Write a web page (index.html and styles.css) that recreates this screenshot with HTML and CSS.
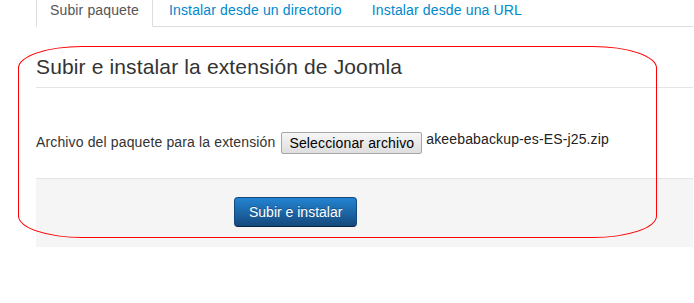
FILE: index.html
```html
<!DOCTYPE html>
<html lang="es">
<head>
  <meta charset="UTF-8" />
  <title>Gestor de extensiones: Instalar</title>
  <link rel="stylesheet" href="styles.css">
</head>
<body>
  <div class="page">
    <ul class="tabs">
      <li><a class="tab active" href="#">Subir paquete</a></li>
      <li><a class="tab" href="#">Instalar desde un directorio</a></li>
      <li><a class="tab" href="#">Instalar desde una URL</a></li>
    </ul>

    <form class="upload">
      <div class="legend">Subir e instalar la extensión de Joomla</div>
      <div class="row">
        <label class="label">Archivo del paquete para la extensión</label>
        <span class="file-btn">Seleccionar archivo</span>
        <span class="file-name">akeebabackup-es-ES-j25.zip</span>
      </div>
      <div class="actions">
        <button type="button" class="btn-primary">Subir e instalar</button>
      </div>
    </form>

    <div class="mark"></div>
  </div>
</body>
</html>
```

FILE: styles.css
```css
body {
  margin: 0;
  background: #fff;
  font-family: 'Liberation Sans', Arial, sans-serif;
  font-size: 14px;
  letter-spacing: 0.14px;
  color: #333;
}

.page {
  position: relative;
  padding-left: 36px;
  padding-right: 1px;
}

.tabs {
  display: flex;
  margin: 0;
  padding: 0;
  list-style: none;
  border-bottom: 1px solid #ddd;
}

.tab {
  display: block;
  margin-right: 2px;
  margin-bottom: -1px;
  padding: 0 13px 6px;
  line-height: 20px;
  border: 1px solid transparent;
  border-top: none;
  color: #08c;
  text-decoration: none;
}

.tab.active {
  color: #555;
  background: #fff;
  border-color: #ddd;
  border-bottom-color: #fff;
}

.upload {
  margin-top: 20px;
}

.legend {
  font-size: 21px;
  line-height: 40px;
  color: #333;
  border-bottom: 1px solid #e5e5e5;
}

.row {
  display: flex;
  align-items: flex-start;
  margin-top: 44px;
  height: 22px;
}

.label {
  line-height: 20px;
  margin-right: 6px;
}

.file-btn {
  padding: 2px 7px;
  line-height: 16px;
  color: #000;
  border: 1px solid #a6a6a6;
  border-radius: 2px;
  background: linear-gradient(#f6f6f6, #dedede);
}

.file-name {
  margin-left: 4px;
  margin-top: -3px;
  line-height: 20px;
  color: #222;
}

.actions {
  margin-top: 24px;
  padding: 18px 0 20px 198px;
  background: #f5f5f5;
  border-top: 1px solid #e5e5e5;
}

.btn-primary {
  padding: 4px 14px;
  font-family: inherit;
  font-size: 14px;
  line-height: 20px;
  color: #fff;
  text-shadow: 0 -1px 0 rgba(0, 0, 0, 0.25);
  background: linear-gradient(#2384d3, #15497c);
  border: 1px solid #15497c;
  border-bottom-color: #0a233c;
  border-radius: 4px;
  cursor: pointer;
}

/* red annotation drawn over the form */
.mark {
  position: absolute;
  left: 18px;
  top: 46px;
  width: 637px;
  height: 190px;
  border: 1px solid #f00;
  border-radius: 64px / 22px;
  pointer-events: none;
}
```
